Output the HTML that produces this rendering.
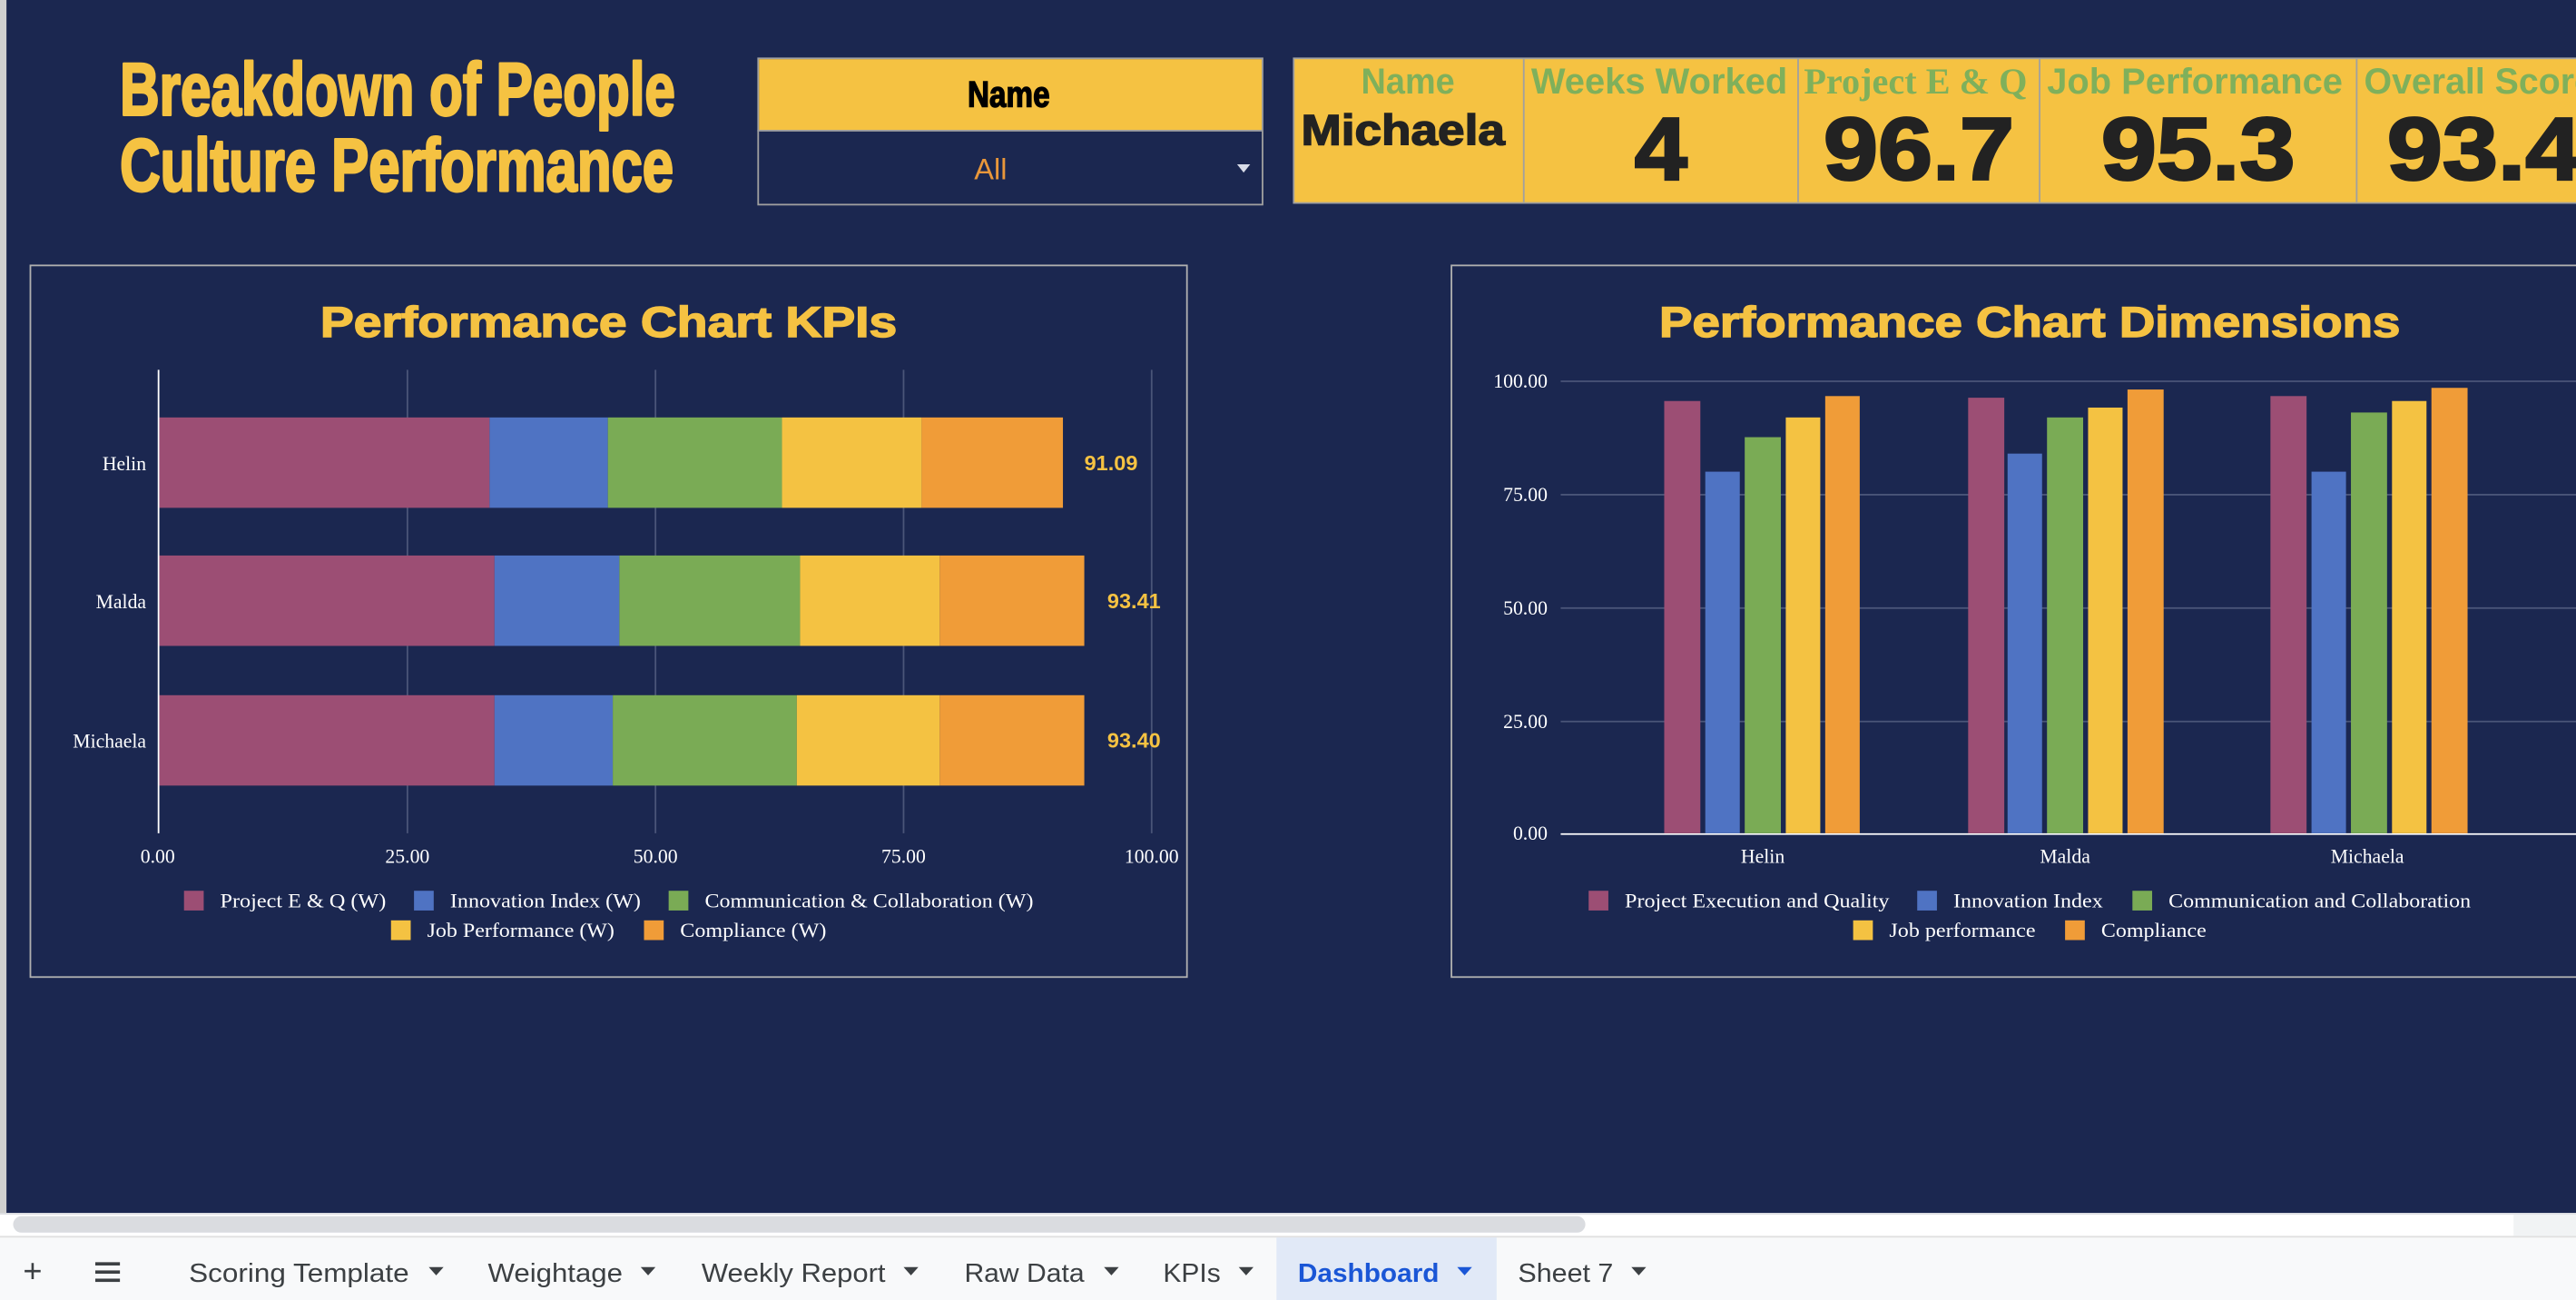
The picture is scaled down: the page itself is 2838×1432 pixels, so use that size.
<!DOCTYPE html>
<html><head><meta charset="utf-8"><style>
html,body{margin:0;padding:0;background:#1b2750;overflow:hidden}
svg{display:block}
</style></head><body>
<svg width="2838" height="1432" viewBox="0 0 1568 791" preserveAspectRatio="none" xmlns="http://www.w3.org/2000/svg">
<rect x="0" y="0" width="1568" height="791" fill="#1b2750"/>
<rect x="0" y="0" width="4" height="740" fill="#d0d0d0"/>
<rect x="4" y="0" width="1" height="740" fill="#1b2750"/>
<!-- Title -->
<g font-family="'Liberation Sans Narrow','Liberation Sans',sans-serif" font-weight="bold" fill="#f5c242" stroke="#f5c242" stroke-width="1.6" stroke-linejoin="round">
<text x="73" y="70" font-size="45" textLength="338" lengthAdjust="spacingAndGlyphs">Breakdown of People</text>
<text x="73" y="116" font-size="45" textLength="337" lengthAdjust="spacingAndGlyphs">Culture Performance</text>
</g>
<!-- Name dropdown -->
<rect x="461.5" y="35.5" width="307" height="89" fill="#1b2750" stroke="#a0a0a0" stroke-width="1"/>
<rect x="462" y="36" width="306" height="43" fill="#f5c242"/>
<line x1="461" y1="79.5" x2="768" y2="79.5" stroke="#a0a0a0"/>
<text x="614" y="65" font-family="'Liberation Sans Narrow','Liberation Sans',sans-serif" font-weight="bold" font-size="22" text-anchor="middle" fill="#000" stroke="#000" stroke-width="0.8" textLength="50" lengthAdjust="spacingAndGlyphs">Name</text>
<text x="603" y="109" font-family="'Liberation Sans Narrow','Liberation Sans',sans-serif" font-size="18" text-anchor="middle" fill="#e9973a">All</text>
<path d="M753 100 L761 100 L757 105 Z" fill="#d8dce8"/>
<!-- KPI row -->
<rect x="787.5" y="35.5" width="790" height="88" fill="#f5c242" stroke="#a0a0a0"/>
<g stroke="#a0a0a0"><line x1="927.5" y1="36" x2="927.5" y2="123"/><line x1="1094.5" y1="36" x2="1094.5" y2="123"/><line x1="1241.5" y1="36" x2="1241.5" y2="123"/><line x1="1434.5" y1="36" x2="1434.5" y2="123"/></g>
<g font-family="'Liberation Sans Narrow','Liberation Sans',sans-serif" font-weight="bold" fill="#7fb05b" font-size="22">
<text x="857" y="57" text-anchor="middle" textLength="57" lengthAdjust="spacingAndGlyphs">Name</text>
<text x="1010" y="57" text-anchor="middle" textLength="156" lengthAdjust="spacingAndGlyphs">Weeks Worked</text>
<text x="1166" y="57" text-anchor="middle" font-family="'Liberation Serif',serif" textLength="136" lengthAdjust="spacingAndGlyphs">Project E &amp; Q</text>
<text x="1336" y="57" text-anchor="middle" textLength="180" lengthAdjust="spacingAndGlyphs">Job Performance</text>
<text x="1439" y="57" textLength="140" lengthAdjust="spacingAndGlyphs">Overall Score</text>
</g>
<g font-family="'Liberation Sans','Liberation Sans Narrow',sans-serif" font-weight="bold" fill="#222" stroke="#222">
<text x="792" y="88" font-size="26" stroke-width="0.8" textLength="124" lengthAdjust="spacingAndGlyphs">Michaela</text>
<text x="1011" y="109" font-size="54" text-anchor="middle" stroke-width="1.5" textLength="32" lengthAdjust="spacingAndGlyphs">4</text>
<text x="1110" y="109" font-size="54" stroke-width="1.5" textLength="116" lengthAdjust="spacingAndGlyphs">96.7</text>
<text x="1279" y="109" font-size="54" stroke-width="1.5" textLength="118" lengthAdjust="spacingAndGlyphs">95.3</text>
<text x="1453" y="109" font-size="54" stroke-width="1.5" textLength="118" lengthAdjust="spacingAndGlyphs">93.4</text>
</g>
<!-- Chart 1 -->
<rect x="18.5" y="161.5" width="704" height="433" fill="#1b2750" stroke="#b0b0b0"/>
<text x="195" y="205" font-family="'Liberation Sans',sans-serif" font-weight="bold" font-size="26" fill="#f5c242" stroke="#f5c242" stroke-width="0.8" textLength="351" lengthAdjust="spacingAndGlyphs">Performance Chart KPIs</text>
<g stroke="#4a5578" stroke-width="1"><line x1="248" y1="225" x2="248" y2="507"/><line x1="399" y1="225" x2="399" y2="507"/><line x1="550" y1="225" x2="550" y2="507"/><line x1="701" y1="225" x2="701" y2="507"/></g>
<line x1="96.5" y1="225" x2="96.5" y2="507" stroke="#fff"/>
<g>
<rect x="97" y="254" width="201" height="55" fill="#9c4e74"/><rect x="298" y="254" width="72" height="55" fill="#4f73c3"/><rect x="370" y="254" width="106" height="55" fill="#7aab55"/><rect x="476" y="254" width="85" height="55" fill="#f4c242"/><rect x="561" y="254" width="86" height="55" fill="#f09c38"/>
<rect x="97" y="338" width="204" height="55" fill="#9c4e74"/><rect x="301" y="338" width="76" height="55" fill="#4f73c3"/><rect x="377" y="338" width="110" height="55" fill="#7aab55"/><rect x="487" y="338" width="85" height="55" fill="#f4c242"/><rect x="572" y="338" width="88" height="55" fill="#f09c38"/>
<rect x="97" y="423" width="204" height="55" fill="#9c4e74"/><rect x="301" y="423" width="72" height="55" fill="#4f73c3"/><rect x="373" y="423" width="112" height="55" fill="#7aab55"/><rect x="485" y="423" width="87" height="55" fill="#f4c242"/><rect x="572" y="423" width="88" height="55" fill="#f09c38"/>
</g>
<g font-family="'Liberation Sans',sans-serif" font-weight="bold" font-size="13" fill="#f5c242">
<text x="660" y="286">91.09</text><text x="674" y="370">93.41</text><text x="674" y="455">93.40</text>
</g>
<g font-family="'Liberation Serif',serif" font-size="12" fill="#fff">
<text x="89" y="286" text-anchor="end">Helin</text><text x="89" y="370" text-anchor="end">Malda</text><text x="89" y="455" text-anchor="end">Michaela</text>
<text x="96" y="525" text-anchor="middle">0.00</text><text x="248" y="525" text-anchor="middle">25.00</text><text x="399" y="525" text-anchor="middle">50.00</text><text x="550" y="525" text-anchor="middle">75.00</text><text x="701" y="525" text-anchor="middle">100.00</text>
<rect x="112" y="542" width="12" height="12" fill="#9c4e74"/><text x="134" y="552" textLength="101" lengthAdjust="spacingAndGlyphs">Project E &amp; Q (W)</text>
<rect x="252" y="542" width="12" height="12" fill="#4f73c3"/><text x="274" y="552" textLength="116" lengthAdjust="spacingAndGlyphs">Innovation Index (W)</text>
<rect x="407" y="542" width="12" height="12" fill="#7aab55"/><text x="429" y="552" textLength="200" lengthAdjust="spacingAndGlyphs">Communication &amp; Collaboration (W)</text>
<rect x="238" y="560" width="12" height="12" fill="#f4c242"/><text x="260" y="570" textLength="114" lengthAdjust="spacingAndGlyphs">Job Performance (W)</text>
<rect x="392" y="560" width="12" height="12" fill="#f09c38"/><text x="414" y="570" textLength="89" lengthAdjust="spacingAndGlyphs">Compliance (W)</text>
</g>
<!-- Chart 2 -->
<rect x="883.5" y="161.5" width="700" height="433" fill="#1b2750" stroke="#b0b0b0"/>
<text x="1010" y="205" font-family="'Liberation Sans',sans-serif" font-weight="bold" font-size="26" fill="#f5c242" stroke="#f5c242" stroke-width="0.8" textLength="451" lengthAdjust="spacingAndGlyphs">Performance Chart Dimensions</text>
<g stroke="#4a5578"><line x1="950" y1="232" x2="1568" y2="232"/><line x1="950" y1="301" x2="1568" y2="301"/><line x1="950" y1="370" x2="1568" y2="370"/><line x1="950" y1="439" x2="1568" y2="439"/></g>
<line x1="950" y1="507.5" x2="1568" y2="507.5" stroke="#fff"/>
<g>
<rect x="1013" y="244" width="22" height="263" fill="#9c4e74"/><rect x="1038" y="287" width="21" height="220" fill="#4f73c3"/><rect x="1062" y="266" width="22" height="241" fill="#7aab55"/><rect x="1087" y="254" width="21" height="253" fill="#f4c242"/><rect x="1111" y="241" width="21" height="266" fill="#f09c38"/>
<rect x="1198" y="242" width="22" height="265" fill="#9c4e74"/><rect x="1222" y="276" width="21" height="231" fill="#4f73c3"/><rect x="1246" y="254" width="22" height="253" fill="#7aab55"/><rect x="1271" y="248" width="21" height="259" fill="#f4c242"/><rect x="1295" y="237" width="22" height="270" fill="#f09c38"/>
<rect x="1382" y="241" width="22" height="266" fill="#9c4e74"/><rect x="1407" y="287" width="21" height="220" fill="#4f73c3"/><rect x="1431" y="251" width="22" height="256" fill="#7aab55"/><rect x="1456" y="244" width="21" height="263" fill="#f4c242"/><rect x="1480" y="236" width="22" height="271" fill="#f09c38"/>
</g>
<g font-family="'Liberation Serif',serif" font-size="12" fill="#fff">
<text x="942" y="236" text-anchor="end">100.00</text><text x="942" y="305" text-anchor="end">75.00</text><text x="942" y="374" text-anchor="end">50.00</text><text x="942" y="443" text-anchor="end">25.00</text><text x="942" y="511" text-anchor="end">0.00</text>
<text x="1073" y="525" text-anchor="middle">Helin</text><text x="1257" y="525" text-anchor="middle">Malda</text><text x="1441" y="525" text-anchor="middle">Michaela</text>
<rect x="967" y="542" width="12" height="12" fill="#9c4e74"/><text x="989" y="552" textLength="161" lengthAdjust="spacingAndGlyphs">Project Execution and Quality</text>
<rect x="1167" y="542" width="12" height="12" fill="#4f73c3"/><text x="1189" y="552" textLength="91" lengthAdjust="spacingAndGlyphs">Innovation Index</text>
<rect x="1298" y="542" width="12" height="12" fill="#7aab55"/><text x="1320" y="552" textLength="184" lengthAdjust="spacingAndGlyphs">Communication and Collaboration</text>
<rect x="1128" y="560" width="12" height="12" fill="#f4c242"/><text x="1150" y="570" textLength="89" lengthAdjust="spacingAndGlyphs">Job performance</text>
<rect x="1257" y="560" width="12" height="12" fill="#f09c38"/><text x="1279" y="570" textLength="64" lengthAdjust="spacingAndGlyphs">Compliance</text>
</g>
<!-- scrollbar -->
<rect x="0" y="738" width="1568" height="15" fill="#fff"/>
<rect x="0" y="738" width="1568" height="1" fill="#dadce0"/>
<rect x="8" y="740" width="957" height="10" rx="5" fill="#dadce0"/>
<rect x="1530" y="739" width="38" height="13" fill="#f1f3f4"/>
<!-- tabs -->
<rect x="0" y="752" width="1568" height="39" fill="#f8f9fa"/>
<rect x="0" y="752" width="1568" height="1" fill="#e0e0e0"/>
<rect x="777" y="753" width="134" height="38" fill="#e1e9f7"/>
<g font-family="'Liberation Sans',sans-serif" font-size="16" fill="#3c4043">
<text x="14" y="780" font-size="20">+</text>
<rect x="58" y="768" width="15" height="2"/><rect x="58" y="773" width="15" height="2"/><rect x="58" y="778" width="15" height="2"/>
<text x="115" y="780" textLength="134" lengthAdjust="spacingAndGlyphs">Scoring Template</text><path d="M261 771h9l-4.5 5z"/>
<text x="297" y="780" textLength="82" lengthAdjust="spacingAndGlyphs">Weightage</text><path d="M390 771h9l-4.5 5z"/>
<text x="427" y="780" textLength="112" lengthAdjust="spacingAndGlyphs">Weekly Report</text><path d="M550 771h9l-4.5 5z"/>
<text x="587" y="780" textLength="73" lengthAdjust="spacingAndGlyphs">Raw Data</text><path d="M672 771h9l-4.5 5z"/>
<text x="708" y="780" textLength="35" lengthAdjust="spacingAndGlyphs">KPIs</text><path d="M754 771h9l-4.5 5z"/>
<text x="790" y="780" fill="#1a56d6" font-weight="bold" textLength="86" lengthAdjust="spacingAndGlyphs">Dashboard</text><path d="M887 771h9l-4.5 5z" fill="#1a56d6"/>
<text x="924" y="780" textLength="58" lengthAdjust="spacingAndGlyphs">Sheet 7</text><path d="M993 771h9l-4.5 5z"/>
</g>
</svg>
</body></html>
